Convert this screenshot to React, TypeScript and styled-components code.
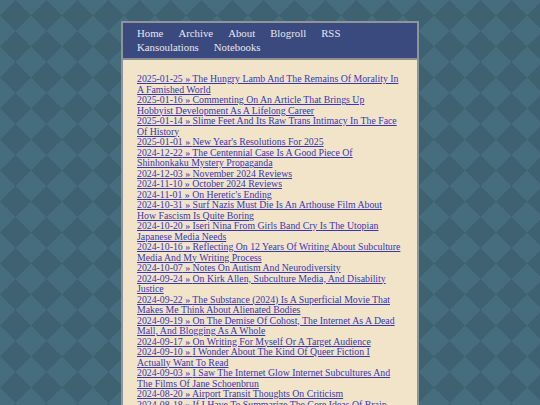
import React from 'react';
import styled, { createGlobalStyle } from 'styled-components';

const navLinks = ['Home', 'Archive', 'About', 'Blogroll', 'RSS', 'Kansoulations', 'Notebooks'];

const posts = [
  ['2025-01-25', 'The Hungry Lamb And The Remains Of Morality In A Famished World'],
  ['2025-01-16', 'Commenting On An Article That Brings Up Hobbyist Development As A Lifelong Career'],
  ['2025-01-14', 'Slime Feet And Its Raw Trans Intimacy In The Face Of History'],
  ['2025-01-01', "New Year's Resolutions For 2025"],
  ['2024-12-22', 'The Centennial Case Is A Good Piece Of Shinhonkaku Mystery Propaganda'],
  ['2024-12-03', 'November 2024 Reviews'],
  ['2024-11-10', 'October 2024 Reviews'],
  ['2024-11-01', "On Heretic's Ending"],
  ['2024-10-31', 'Surf Nazis Must Die Is An Arthouse Film About How Fascism Is Quite Boring'],
  ['2024-10-20', 'Iseri Nina From Girls Band Cry Is The Utopian Japanese Media Needs'],
  ['2024-10-16', 'Reflecting On 12 Years Of Writing About Subculture Media And My Writing Process'],
  ['2024-10-07', 'Notes On Autism And Neurodiversity'],
  ['2024-09-24', 'On Kirk Allen, Subculture Media, And Disability Justice'],
  ['2024-09-22', 'The Substance (2024) Is A Superficial Movie That Makes Me Think About Alienated Bodies'],
  ['2024-09-19', 'On The Demise Of Cohost, The Internet As A Dead Mall, And Blogging As A Whole'],
  ['2024-09-17', 'On Writing For Myself Or A Target Audience'],
  ['2024-09-10', 'I Wonder About The Kind Of Queer Fiction I Actually Want To Read'],
  ['2024-09-03', 'I Saw The Internet Glow Internet Subcultures And The Films Of Jane Schoenbrun'],
  ['2024-08-20', 'Airport Transit Thoughts On Criticism'],
  ['2024-08-18', 'If I Have To Summarize The Core Ideas Of Brain Rot'],
  ['2024-08-05', 'July 2024 Reviews'],
];

export default function App() {
  return (
    <>
      <GlobalStyle />
      <Page>
        <Panel>
          <Nav>
            <NavList>
              {navLinks.map((link) => (
                <NavLink key={link} href="#">
                  {link}
                </NavLink>
              ))}
            </NavList>
          </Nav>
          <Content>
            {posts.map(([date, title]) => (
              <PostLink key={date + title} href="#">
                {date} » {title}
              </PostLink>
            ))}
          </Content>
        </Panel>
      </Page>
    </>
  );
}

const light = '#466d7d';
const dark = '#3e6272';

const GlobalStyle = createGlobalStyle`
  html, body {
    margin: 0;
    padding: 0;
  }
  body {
    font-family: "Liberation Serif", "DejaVu Serif", serif;
    background-color: ${dark};
    background-image:
      linear-gradient(45deg, ${light} 25%, transparent 25%),
      linear-gradient(135deg, ${light} 25%, transparent 25%),
      linear-gradient(225deg, ${light} 25%, transparent 25%),
      linear-gradient(315deg, ${light} 25%, transparent 25%);
    background-size: 31px 31px;
    background-position: 0 0;
  }
`;

const Page = styled.div({
  display: 'flex',
  justifyContent: 'center',
  paddingTop: 21,
});

const Panel = styled.div({
  width: 294,
  border: '2px solid #8d9599',
  backgroundColor: '#f1e4c9',
});

const Nav = styled.nav({
  backgroundColor: '#3a4a7e',
  padding: '3px 14px 4px 14px',
  borderBottom: '2px solid #8d9193',
});

const NavList = styled.div({
  display: 'flex',
  flexWrap: 'wrap',
  width: 240,
  columnGap: 15,
});

const NavLink = styled.a({
  color: '#e8e6ee',
  textDecoration: 'none',
  fontSize: 10.8,
  lineHeight: '14px',
});

const Content = styled.div({
  padding: '14px 15.5px 12px 14px',
  display: 'flex',
  flexDirection: 'column',
});

const PostLink = styled.a({
  color: '#3737b5',
  textDecoration: 'underline',
  fontSize: 9.8,
  lineHeight: '10.5px',
});
